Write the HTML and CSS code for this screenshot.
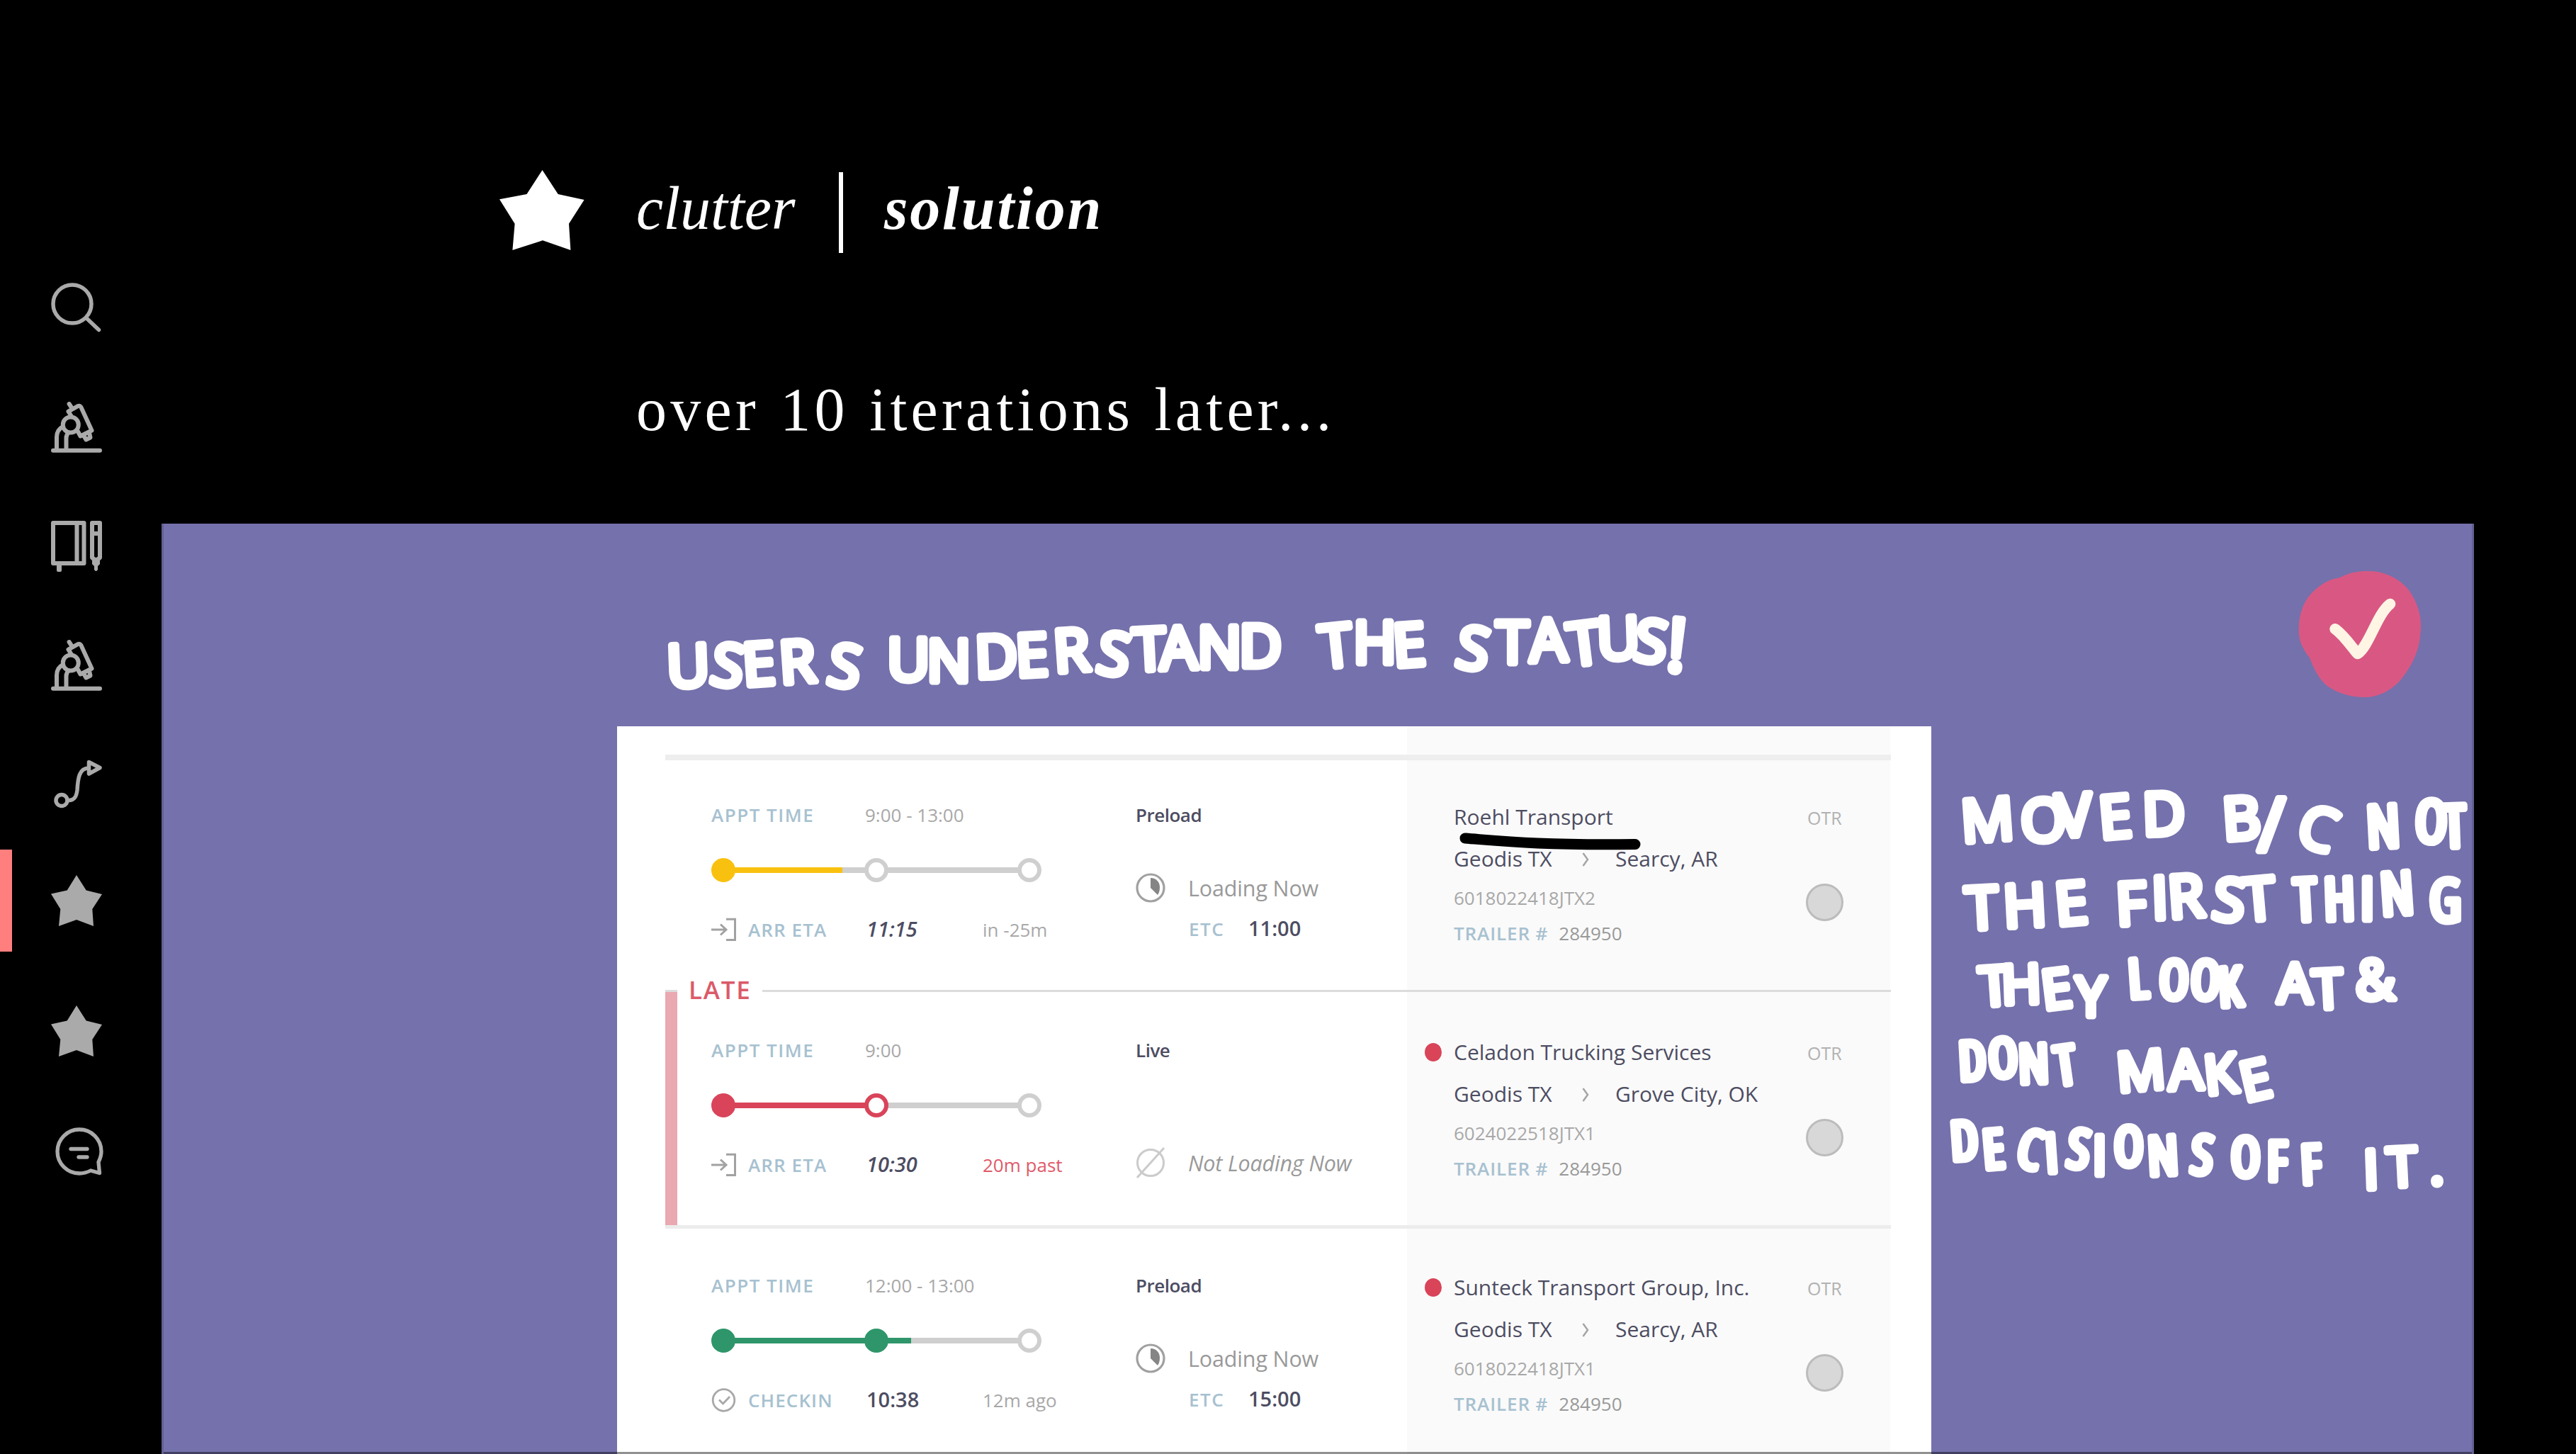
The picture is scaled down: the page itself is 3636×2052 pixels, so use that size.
FILE: index.html
```html
<!DOCTYPE html>
<html lang="en">
<head>
<meta charset="utf-8">
<title>clutter | solution</title>
<link rel="stylesheet" href="styles.css">
</head>
<body>
<svg class="defs" width="0" height="0" aria-hidden="true">
  <symbol id="star" viewBox="0 0 72 72"><path d="M36 0L49.7 21.6L72 27L58.3 48L60 72L36 63L11 72L13.3 48L0 26.5L22.7 21.6Z" fill="currentColor"/></symbol>
  <symbol id="microscope" viewBox="0 0 72 72">
    <g fill="none" stroke="currentColor" stroke-width="6" stroke-linecap="round" stroke-linejoin="round">
      <path d="M3 68.8H69M8 67V50C8 43 11 38 17 35M21.5 67V51C21.5 48 22.5 46 24.5 44M25.6 3L29.5 9"/>
      <circle cx="27.8" cy="32.5" r="11"/>
      <path d="M28.5 20L24.5 13.7L37.5 6.3C39.500 5.300 41 5.500 42.200 7.300L57.500 40.500L41.500 48.500L38 42M46 47.500L49.500 53.500L55.500 50.500L54 44"/>
    </g>
  </symbol>
  <symbol id="enter" viewBox="0 0 36 34"><path d="M0 17H20M13 9.500L21 17L13 24.500M21 2.200H33.500V31.500H21" fill="none" stroke="#a2a2a2" stroke-width="3"/></symbol>
  <symbol id="pie" viewBox="0 0 42 44"><circle cx="21" cy="22" r="19" fill="none" stroke="#a0a0a0" stroke-width="3.2"/><path d="M21 8C29 8 34 14 34 21C34 26 33 29 31 32L21 22Z" fill="#858585"/></symbol>
</svg>
<div class="page">
  <nav class="sidebar">
    <a class="nav-item"><svg class="icon" viewBox="0 0 72 72"><g fill="none" stroke="currentColor" stroke-width="5.500" stroke-linecap="round"><circle cx="30" cy="30" r="27"/><path d="M50 50L67.500 66.500"/></g></svg></a>
    <a class="nav-item"><svg class="icon"><use href="#microscope"/></svg></a>
    <a class="nav-item"><svg class="icon" viewBox="0 0 72 72"><g fill="none" stroke="currentColor" stroke-width="6" stroke-linejoin="round"><path d="M3 3H46.500V60H3ZM36.500 3V60"/><path d="M58 3H69V52L65 55H62L58 52ZM58 18H69" /></g><path d="M8 60H15V70Q15 72 13 72H10Q8 72 8 70ZM58 53H69V61L66 64V69Q63.500 73 61 69V64L58 61Z" fill="currentColor"/></svg></a>
    <a class="nav-item"><svg class="icon"><use href="#microscope"/></svg></a>
    <a class="nav-item"><svg class="icon" viewBox="0 0 72 72"><g fill="none" stroke="currentColor" stroke-width="5.500" stroke-linejoin="round"><circle cx="15" cy="58.500" r="8"/><path d="M24 58.500C33 59 36 53 37 44C38 27 40 13 53 13"/><path d="M53.500 4.500L69 12.500L53.500 21Z"/></g></svg></a>
    <a class="nav-item active"><svg class="icon"><use href="#star"/></svg></a>
    <a class="nav-item"><svg class="icon"><use href="#star"/></svg></a>
    <a class="nav-item"><svg class="icon chat" viewBox="0 0 72 72"><g fill="none" stroke="currentColor" stroke-width="5.300" stroke-linejoin="round" stroke-linecap="round"><path d="M56 63C51 65.500 46 67 40 67A31 31 0 1 1 71 36C71 41 69.500 46 67 51L68.500 66.500Z"/><path d="M28 32.500H51M39 44H51"/></g></svg></a>
  </nav>
  <main class="content">
    <header class="intro">
      <svg class="intro-star" viewBox="0 0 120 113"><path d="M60.500 0L82.700 34L119.600 42L98 75.700L100.400 113L61 99.300L18.400 113L21.600 75.700L0 41.300L38.500 34Z" fill="#fff"/></svg>
      <div class="intro-copy">
        <h1 class="title"><em class="title-light">clutter</em><i class="divider"></i><em class="title-bold">solution</em></h1>
        <p class="subtitle">over 10 iterations later...</p>
      </div>
    </header>
    <section class="artboard">
      <div class="card">
        <article class="row">
          <div class="col-time">
            <div class="line appt"><span class="label">APPT TIME</span><span class="muted">9:00 - 13:00</span></div>
            <div class="track yellow"><i class="dot full"></i><i class="seg half"></i><i class="dot"></i><i class="seg"></i><i class="dot"></i></div>
            <div class="line eta"><svg class="eta-icon"><use href="#enter"/></svg><span class="label eta-label">ARR ETA</span><em class="time">11:15</em><span class="muted delta">in -25m</span></div>
          </div>
          <div class="col-load">
            <div class="kind">Preload</div>
            <div class="loading"><svg class="load-icon"><use href="#pie"/></svg><span>Loading Now</span></div>
            <div class="etc"><span class="label">ETC</span><b class="time">11:00</b></div>
          </div>
          <div class="col-carrier">
            <i class="flag"></i>
            <div class="carrier">
              <div class="name">Roehl Transport</div>
              <div class="route"><span class="from">Geodis TX</span><svg class="chev" viewBox="0 0 10 20"><path d="M1.500 1L8 10L1.500 19" fill="none" stroke="#a5a5a5" stroke-width="2.500"/></svg><span>Searcy, AR</span></div>
              <div class="code">6018022418JTX2</div>
              <div class="trailer"><span class="label">TRAILER #</span><span class="num">284950</span></div>
            </div>
            <div class="mode"><span>OTR</span><i class="avatar"></i></div>
          </div>
        </article>
        <article class="row late">
          <div class="late-tag">LATE</div>
          <div class="col-time">
            <div class="line appt"><span class="label">APPT TIME</span><span class="muted">9:00</span></div>
            <div class="track red"><i class="dot full"></i><i class="seg on"></i><i class="dot ring"></i><i class="seg"></i><i class="dot"></i></div>
            <div class="line eta"><svg class="eta-icon"><use href="#enter"/></svg><span class="label eta-label">ARR ETA</span><em class="time">10:30</em><span class="past delta">20m past</span></div>
          </div>
          <div class="col-load">
            <div class="kind">Live</div>
            <div class="loading idle"><svg class="load-icon" viewBox="0 0 42 44"><circle cx="21" cy="22" r="18.500" fill="none" stroke="#cbcbcb" stroke-width="3"/><path d="M2 43L40 1" stroke="#cbcbcb" stroke-width="3"/></svg><em>Not Loading Now</em></div>
          </div>
          <div class="col-carrier">
            <i class="flag alert"></i>
            <div class="carrier">
              <div class="name">Celadon Trucking Services</div>
              <div class="route"><span class="from">Geodis TX</span><svg class="chev" viewBox="0 0 10 20"><path d="M1.500 1L8 10L1.500 19" fill="none" stroke="#a5a5a5" stroke-width="2.500"/></svg><span>Grove City, OK</span></div>
              <div class="code">6024022518JTX1</div>
              <div class="trailer"><span class="label">TRAILER #</span><span class="num">284950</span></div>
            </div>
            <div class="mode"><span>OTR</span><i class="avatar"></i></div>
          </div>
        </article>
        <article class="row">
          <div class="col-time">
            <div class="line appt"><span class="label">APPT TIME</span><span class="muted">12:00 - 13:00</span></div>
            <div class="track green"><i class="dot full"></i><i class="seg on"></i><i class="dot full"></i><i class="seg quarter"></i><i class="dot"></i></div>
            <div class="line eta"><svg class="eta-icon" viewBox="0 0 36 34"><circle cx="17.500" cy="17" r="15.300" fill="none" stroke="#a8a8a8" stroke-width="2.800"/><path d="M11 16.500L16.500 22L26 12" fill="none" stroke="#a8a8a8" stroke-width="2.800"/></svg><span class="label eta-label">CHECKIN</span><b class="time">10:38</b><span class="muted delta">12m ago</span></div>
          </div>
          <div class="col-load">
            <div class="kind">Preload</div>
            <div class="loading"><svg class="load-icon"><use href="#pie"/></svg><span>Loading Now</span></div>
            <div class="etc"><span class="label">ETC</span><b class="time">15:00</b></div>
          </div>
          <div class="col-carrier">
            <i class="flag alert"></i>
            <div class="carrier">
              <div class="name">Sunteck Transport Group, Inc.</div>
              <div class="route"><span class="from">Geodis TX</span><svg class="chev" viewBox="0 0 10 20"><path d="M1.500 1L8 10L1.500 19" fill="none" stroke="#a5a5a5" stroke-width="2.500"/></svg><span>Searcy, AR</span></div>
              <div class="code">6018022418JTX1</div>
              <div class="trailer"><span class="label">TRAILER #</span><span class="num">284950</span></div>
            </div>
            <div class="mode"><span>OTR</span><i class="avatar"></i></div>
          </div>
        </article>
      </div>
      <svg class="notes" viewBox="228 739 3264 1313">
        <path d="M2068 1183C2120 1187 2170 1193 2308 1191.500" fill="none" stroke="#000" stroke-width="15" stroke-linecap="round"/>
        <g class="hand hand-lg">
          <text x="942 1000 1050 1102 1165" y="970 964 968 965 965" rotate="-2 10 -4 -4 10">USERS</text>
          <text x="1252 1308 1377 1435 1489 1545 1601 1638 1690 1749" y="960 962 957 955 949 948 947 945 943 941" rotate="0 0 -2 -3 -4 10 -3 -2 0 0">UNDERSTAND</text>
          <text x="1866 1910 1968" y="943 936 941" rotate="-6 0 -4">THE</text>
          <text x="2052 2112 2160 2217 2255 2304 2350" y="940 936 934 940 931 931 946" rotate="10 0 -2 -7 -2 8 5">STATUS<tspan class="tall">!</tspan></text>
        </g>
        <g class="hand hand-lg">
          <text x="2770 2852 2904 2965 3025" y="1189 1187 1181 1184 1179" rotate="-4 0 -3 -5 -2">MOVED</text>
          <text x="3139 3187 3238" y="1186 1201 1189" rotate="-4 0 18">B<tspan class="tall">/</tspan>C</text>
          <text class="tight" x="3342 3408 3450" y="1197 1188 1196" rotate="-3 2 -2">NOT</text>
          <text x="2776 2829 2903" y="1312 1309 1306" rotate="-3 -3 -5">THE</text>
          <text x="2988 3038 3062 3120 3168" y="1306 1297 1296 1296 1300" rotate="-3 -2 -4 8 -5">FIRST</text>
          <text class="tight" x="3240 3281 3332 3362 3429" y="1300 1299 1298 1292 1300" rotate="-3 -2 0 -4 0">THING</text>
        </g>
        <g class="hand hand-sm">
          <text x="2796 2826 2885 2930" y="1420 1417 1425 1434" rotate="-4 -2 -7 0">THEY</text>
          <text class="tight" x="3006 3047 3091 3133" y="1409 1409 1409 1421" rotate="-4 2 3 -4">LOOK</text>
          <text x="3215 3266 3325" y="1415 1424 1410" rotate="0 -3 0">AT&amp;</text>
          <text class="tight" x="2766 2808 2850 2905" y="1525 1521 1529 1532" rotate="-3 -3 -2 -8">DONT</text>
          <text x="2990 3062 3114 3169" y="1541 1538 1545 1555" rotate="-5 -2 -6 -13">MAKE</text>
          <text class="tight" x="2755 2801 2843 2889 2915 2955 2984 3033 3090" y="1638 1650 1644 1655 1646 1658 1645 1659 1655" rotate="-4 -5 14 -4 8 0 0 -3 6">DECISIONS</text>
          <text class="tight" x="3149 3200 3249" y="1660 1666 1671" rotate="0 0 -3">OFF</text>
          <text x="3337 3371 3430" y="1678 1675 1671" rotate="-2 -3 0">IT.</text>
        </g>
        <g transform="translate(3200 720) scale(.3333)">
          <path d="M425 258C500 256 570 295 605 345C640 400 655 450 650 510C648 590 615 660 560 725C510 775 460 791 415 792C350 792 300 775 255 745C215 710 200 675 180 625C150 585 133 555 134 500C136 430 160 375 200 340C240 305 270 290 305 287C345 265 385 258 425 258Z" fill="#d95883"/>
          <path d="M288 503C330 535 355 575 383 608C430 580 465 440 521 397" fill="none" stroke="#fff5e4" stroke-width="46" stroke-linecap="round" stroke-linejoin="round"/>
        </g>
      </svg>
    </section>
  </main>
</div>
</body>
</html>
```
FILE: styles.css
```css
* { box-sizing: border-box; }
body { margin: 0; background: #000; }
.defs { position: absolute; }
.page { display: grid; grid-template-columns: 228px 3264px; height: 2052px; overflow: hidden; }

/* Left navigation */
.sidebar { padding-top: 363px; color: #aaa; }
.nav-item { display: flex; align-items: center; height: 144px; margin-bottom: 24px; padding-left: 72px; }
.icon { display: block; width: 72px; height: 72px; }
.nav-item.active { margin: -4px 0 40px; border-left: 17px solid #ff7f7f; padding-left: 55px; }
.nav-item.active + .nav-item { margin-bottom: 26px; }
.chat { overflow: visible; }

/* Heading */
.intro { display: flex; height: 739px; padding: 240px 0 0 477px; color: #fff; font-family: "Liberation Serif", serif; }
.intro-star { width: 120px; height: 113px; }
.intro-copy { padding-left: 73px; }
.title { display: flex; align-items: center; height: 120px; margin: 0; font-size: 86px; line-height: 120px; font-weight: 400; }
.title em { padding-bottom: 13px; }
.title-light { width: 286px; }
.divider { width: 6px; height: 114px; margin-right: 58px; background: #fff; }
.title-bold { font-weight: 700; letter-spacing: 2.8px; }
.subtitle { margin: 158px 0 0; font-size: 86px; line-height: 120px; letter-spacing: 5.3px; word-spacing: 2.5px; }

/* Artboard */
.artboard { position: relative; height: 1313px; padding: 286px 0 0 643px; background: #7571ac; overflow: hidden; }
.artboard::after { content: ""; position: absolute; inset: 0; border: solid rgba(0, 0, 0, .14); border-width: 0 3px; box-shadow: inset 0 -3px rgba(0, 0, 0, .43); }
.notes { position: absolute; left: 0; top: 0; width: 3264px; height: 1313px; }
.hand { fill: #fff; stroke: #fff; stroke-width: 9px; stroke-linejoin: round; font-family: "Open Sans", sans-serif; font-stretch: 90%; }
.hand-lg { font-size: 83px; }
.hand-sm { font-size: 76px; }
.tight { font-stretch: 82%; }
.tall { font-size: 104px; }

/* Shipment table */
.card { width: 1855px; height: 1030px; padding: 40px 57px 0 68px; background: linear-gradient(90deg, #fff 1115px, #fafafa 1115px, #fafafa 1797px, #fff 1797px); font-family: "Open Sans", sans-serif; color: #4d4d62; }
.row { display: grid; grid-template-columns: 664px 382px 684px; height: 332px; position: relative; border-top: 8px solid #eee; }
.row.late { border-top: 3px solid #dcdcdc; box-shadow: inset 17px 0 #eaa8b0; }
.row.late + .row { border-top: 5px solid #ececec; }
.row > div { margin-top: -8px; }
.row.late > div { margin-top: -3px; }
.row.late + .row > div { margin-top: -5px; }
.label { color: #a7c1d0; font-size: 26px; font-weight: 600; letter-spacing: 1.5px; }
.muted { color: #a8a8a8; font-size: 26px; }
.past { color: #df5a69; font-size: 26px; }
.row > .late-tag { position: absolute; left: 17px; top: -22px; margin: 0; padding: 0 15px 0 16px; background: #fff; color: #da5b69; font-size: 35px; line-height: 44px; font-weight: 600; letter-spacing: 1.8px; }

.col-time { padding: 70px 0 0 65px; }
.line { display: grid; align-items: baseline; line-height: 30px; }
.appt { grid-template-columns: 217px 1fr; height: 30px; }
.track { display: flex; align-items: center; height: 34px; margin-top: 46px; --c: #cfcfcf; }
.yellow { --c: #f9c10f; }
.red { --c: #d9445a; }
.green { --c: #2e966a; }
.dot { width: 34px; height: 34px; margin-right: -1px; border: 6px solid #cfcfcf; border-radius: 50%; background: #fff; z-index: 1; }
.dot.full { border-color: var(--c); background: var(--c); }
.dot.ring { border-color: var(--c); }
.seg { width: 184px; height: 8px; margin-right: -1px; background: #cfcfcf; }
.seg.on { background: var(--c); }
.seg.half { background: linear-gradient(90deg, var(--c) 152px, #cfcfcf 152px); }
.seg.quarter { background: linear-gradient(90deg, var(--c) 33px, #cfcfcf 33px); }
.eta { grid-template-columns: 52px 167px 164px 1fr; line-height: 34px; height: 34px; margin-top: 49px; }
.eta-icon { width: 36px; height: 34px; align-self: center; }
.eta-label { letter-spacing: 1.1px; }
.time { font-size: 29px; font-weight: 600; }
.delta { white-space: nowrap; }

.col-load { padding-top: 70px; }
.kind { font-size: 26px; line-height: 30px; font-weight: 600; letter-spacing: -.5px; }
.loading { display: flex; gap: 32px; align-items: center; height: 44px; margin-top: 66px; color: #999; font-size: 30.5px; line-height: 44px; white-space: nowrap; letter-spacing: -.15px; }
.loading.idle { margin-top: 122px; }
.load-icon { width: 42px; height: 44px; }
.etc { display: grid; grid-template-columns: 84px 1fr; align-items: baseline; margin: 18px 0 0 75px; line-height: 34px; }

.col-carrier { display: flex; padding-left: 26px; }
.flag { width: 24px; height: 26px; margin: 75px 17px 0 0; border-radius: 50%; }
.flag.alert { background: #d94458; }
.carrier { width: 499px; padding-top: 70px; white-space: nowrap; }
.name, .route { font-size: 30px; line-height: 36px; font-weight: 500; }
.route { display: flex; margin-top: 23px; }
.from { width: 181px; }
.chev { width: 10px; height: 20px; margin: 9px 37px 0 0; }
.code { margin-top: 22px; color: #a8a8a8; font-size: 26px; line-height: 30px; }
.trailer { display: flex; gap: 15px; margin-top: 20px; line-height: 30px; color: #999; font-size: 26px; }
.trailer .label { letter-spacing: .9px; }
.mode { padding-top: 74px; color: #b2b2b2; font-size: 25px; line-height: 30px; }
.mode span, .avatar { display: block; }
.avatar { width: 53px; height: 53px; margin: 78px 0 0 -2px; border: 3px solid #bcbcbc; border-radius: 50%; background: #d8d8d8; }
```
